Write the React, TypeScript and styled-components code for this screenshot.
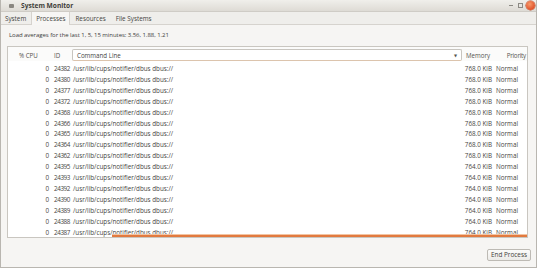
import React from "react";
import styled, { createGlobalStyle } from "styled-components";

const GlobalStyle = createGlobalStyle`
  html, body { margin: 0; padding: 0; background: #ffffff; }
  body { font-family: "Open Sans", "DejaVu Sans", sans-serif; color: #3c3c3c; }
  * { box-sizing: border-box; }
`;

const Window = styled.div`
  width: 537px;
  height: 268px;
  border: 1px solid #b9b6b0;
  border-top: none;
  background: #f6f5f3;
  display: flex;
  flex-direction: column;
  overflow: hidden;
`;

const TitleBar = styled.div`
  height: 12px;
  flex: none;
  display: flex;
  align-items: center;
  padding: 0 1px 0 8px;
  background: linear-gradient(#f0efeb, #dedbd5);
  border-bottom: 1px solid #cfccc6;
`;

const AppIcon = styled.div`
  width: 5px;
  height: 4px;
  border-radius: 1px;
  background: #8a8781;
  margin-right: 7px;
`;

const Title = styled.div`
  font-size: 6.6px;
  font-weight: 700;
  color: #3f3e3a;
  flex: 1;
`;

const Controls = styled.div`
  display: flex;
  align-items: center;
  gap: 3px;
`;

const MinBtn = styled.div`
  width: 4px;
  height: 1px;
  background: #8d8a84;
  margin-right: 2px;
`;

const MaxBtn = styled.div`
  width: 5px;
  height: 5px;
  border: 1px solid #8d8a84;
`;

const CloseBtn = styled.div`
  width: 9px;
  height: 9px;
  border-radius: 50%;
  background: radial-gradient(circle at 40% 35%, #f79a6b, #e0522a 70%);
  box-shadow: 0 0 0 0.5px #b8441f;
`;

const TabBar = styled.div`
  height: 13px;
  flex: none;
  display: flex;
  align-items: stretch;
  margin-left: -1px;
  background: #efeeeb;
  border-bottom: 1px solid #d6d3ce;
`;

const Tab = styled.div<{ $active?: boolean }>`
  font-size: 6.3px;
  display: flex;
  align-items: center;
  padding: 0 4px;
  background: ${(p) => (p.$active ? "#f7f6f4" : "transparent")};
  border-left: 1px solid ${(p) => (p.$active ? "#d6d3ce" : "transparent")};
  border-right: 1px solid ${(p) => (p.$active ? "#d6d3ce" : "transparent")};
  margin-bottom: ${(p) => (p.$active ? "-1px" : "0")};
  color: #45443f;
`;

const Content = styled.div`
  flex: 1;
  display: flex;
  flex-direction: column;
  padding: 4px 8px 6px 6px;
`;

const LoadText = styled.div`
  font-size: 6px;
  letter-spacing: -0.05px;
  height: 12px;
  line-height: 12px;
  padding-left: 2px;
  margin-bottom: 5px;
`;

const TableBox = styled.div`
  position: relative;
  height: 192px;
  background: #ffffff;
  border: 1px solid #c9c6c0;
  display: flex;
  flex-direction: column;
  overflow: hidden;
`;

const cols = "43px 21px 391px 31px 1fr";

const HeaderRow = styled.div`
  display: grid;
  grid-template-columns: ${cols};
  align-items: center;
  height: 16px;
  padding-top: 2px;
  font-size: 6.2px;
  color: #55534e;
  background: #fbfbfa;
`;

const HeaderCell = styled.div<{ $pad?: number; $right?: boolean; $tight?: boolean }>`
  padding-left: ${(p) => p.$pad ?? 0}px;
  padding-right: ${(p) => (p.$right ? "1px" : "0")};
  text-align: ${(p) => (p.$right ? "right" : "left")};
  letter-spacing: ${(p) => (p.$tight ? "-0.2px" : "0")};
  white-space: nowrap;
`;

const SortBox = styled.div`
  height: 12px;
  display: flex;
  align-items: center;
  justify-content: space-between;
  padding: 0 4px;
  background: #ffffff;
  border: 1px solid #c8c5bf;
  border-bottom-color: #dcc4ad;
  border-radius: 2px;
  margin-right: 1px;
  color: #45443f;
`;

const Arrow = styled.span`
  font-size: 4px;
  color: #55534f;
`;

const Rows = styled.div`
  padding-top: 2px;
  display: flex;
  flex-direction: column;
`;

const Row = styled.div`
  display: grid;
  grid-template-columns: ${cols};
  align-items: center;
  height: 10.93px;
  font-size: 6.3px;
  color: #474642;
  white-space: nowrap;
`;

const Cell = styled.div<{ $right?: boolean; $pad?: number; $padR?: number; $tight?: boolean }>`
  text-align: ${(p) => (p.$right ? "right" : "left")};
  padding-left: ${(p) => p.$pad ?? 0}px;
  padding-right: ${(p) => p.$padR ?? 0}px;
  letter-spacing: ${(p) => (p.$tight ? "-0.4px" : "0")};
  overflow: hidden;
`;

const ScrollIndicator = styled.div`
  position: absolute;
  left: 104px;
  right: 0;
  bottom: 0;
  height: 2px;
  background: #e27a3f;
  box-shadow: 0 -1px 0 #f3c4a2;
`;

const Footer = styled.div`
  display: flex;
  justify-content: flex-end;
  padding-top: 11px;
`;

const Button = styled.button`
  font-family: inherit;
  font-size: 6.4px;
  color: #3f3e3a;
  height: 12px;
  padding: 0 3px;
  margin-right: -3px;
  background: linear-gradient(#fbfbfa, #ecebe8);
  border: 1px solid #bdbab4;
  border-radius: 2px;
  line-height: 10px;
`;

const ids = [
  24382, 24380, 24377, 24372, 24368, 24366, 24365, 24364, 24362, 24395,
  24393, 24392, 24390, 24389, 24388, 24387,
];

export default function App() {
  return (
    <>
      <GlobalStyle />
      <Window>
        <TitleBar>
          <AppIcon />
          <Title>System Monitor</Title>
          <Controls>
            <MinBtn />
            <MaxBtn />
            <CloseBtn />
          </Controls>
        </TitleBar>
        <TabBar>
          <Tab>System</Tab>
          <Tab $active>Processes</Tab>
          <Tab>Resources</Tab>
          <Tab>File Systems</Tab>
        </TabBar>
        <Content>
          <LoadText>Load averages for the last 1, 5, 15 minutes: 3.56, 1.88, 1.21</LoadText>
          <TableBox>
            <HeaderRow>
              <HeaderCell $pad={11}>% CPU</HeaderCell>
              <HeaderCell $pad={3}>ID</HeaderCell>
              <SortBox>
                <span>Command Line</span>
                <Arrow>▼</Arrow>
              </SortBox>
              <HeaderCell $pad={3}>Memory</HeaderCell>
              <HeaderCell $right $tight>Priority</HeaderCell>
            </HeaderRow>
            <Rows>
              {ids.map((id, i) => (
                <Row key={id}>
                  <Cell $right $padR={2}>0</Cell>
                  <Cell $pad={3} $tight>{id}</Cell>
                  <Cell $pad={1}>/usr/lib/cups/notifier/dbus dbus://</Cell>
                  <Cell $right $padR={2}>{i < 9 ? "768.0 KiB" : "764.0 KiB"}</Cell>
                  <Cell $pad={2}>Normal</Cell>
                </Row>
              ))}
            </Rows>
            <ScrollIndicator />
          </TableBox>
          <Footer>
            <Button>End Process</Button>
          </Footer>
        </Content>
      </Window>
    </>
  );
}
